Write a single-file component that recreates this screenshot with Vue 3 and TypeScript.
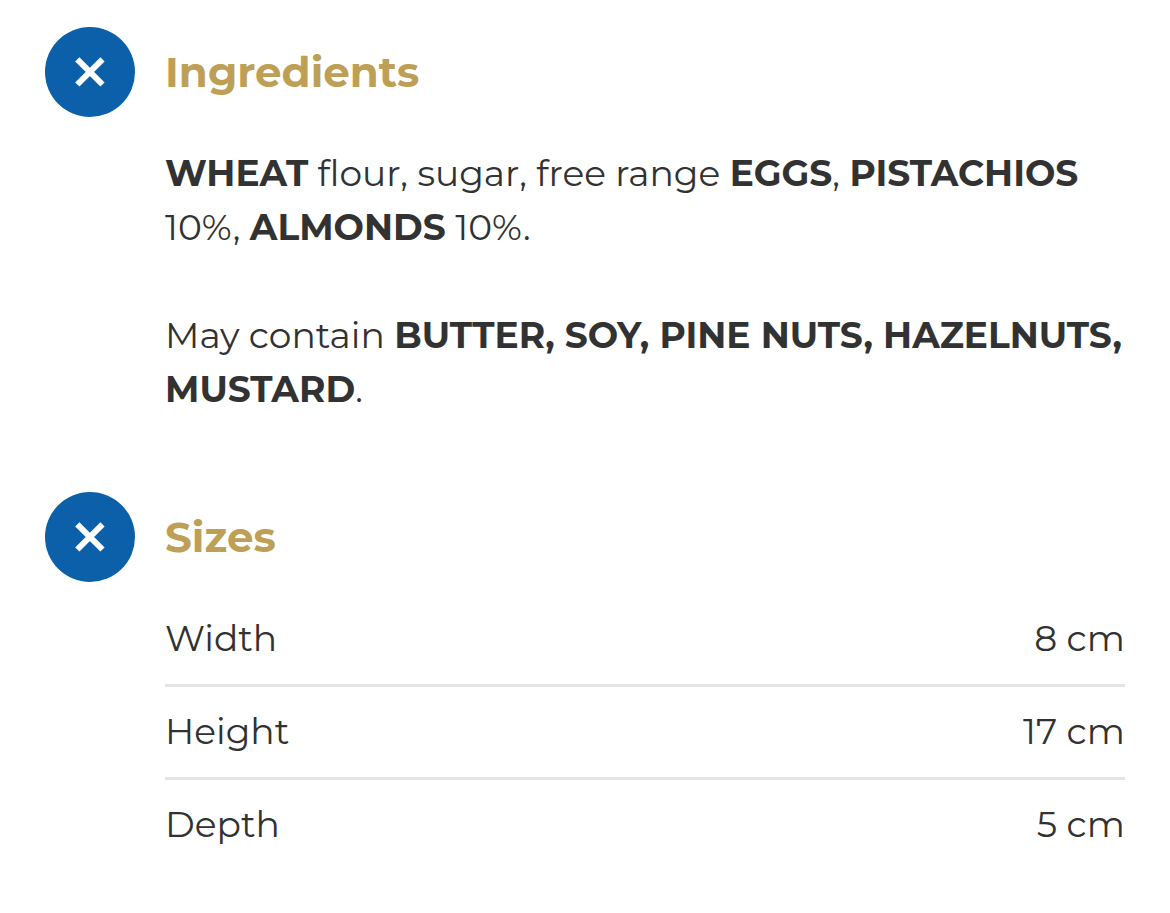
<script setup lang="ts">
import { ref } from 'vue'

interface Part {
  text: string
  strong?: boolean
}

const paragraphs: Part[][] = [
  [
    { text: 'WHEAT', strong: true },
    { text: ' flour, sugar, free range ' },
    { text: 'EGGS', strong: true },
    { text: ', ' },
    { text: 'PISTACHIOS', strong: true },
    { text: ' 10%, ' },
    { text: 'ALMONDS', strong: true },
    { text: ' 10%.' },
  ],
  [
    { text: 'May contain ' },
    { text: 'BUTTER, SOY, PINE NUTS, HAZELNUTS, MUSTARD', strong: true },
    { text: '.' },
  ],
]

const sizes = [
  { name: 'Width', value: '8 cm' },
  { name: 'Height', value: '17 cm' },
  { name: 'Depth', value: '5 cm' },
]

const ingredientsOpen = ref(true)
const sizesOpen = ref(true)
</script>

<template>
  <main class="details">
    <section class="panel">
      <h2 class="heading">
        <button class="toggle" type="button" :aria-expanded="ingredientsOpen" @click="ingredientsOpen = !ingredientsOpen">
          <span class="badge">
            <svg class="icon" viewBox="0 0 90 90" aria-hidden="true">
              <path d="M32.3 32.3L57.5 57.5M57.5 32.3L32.3 57.5" />
            </svg>
          </span>
          <span>Ingredients</span>
        </button>
      </h2>
      <div v-show="ingredientsOpen" class="body">
        <p v-for="(parts, i) in paragraphs" :key="i" class="text"><template v-for="(part, j) in parts" :key="j"><strong v-if="part.strong">{{ part.text }}</strong><template v-else>{{ part.text }}</template></template></p>
      </div>
    </section>

    <section class="panel">
      <h2 class="heading">
        <button class="toggle" type="button" :aria-expanded="sizesOpen" @click="sizesOpen = !sizesOpen">
          <span class="badge">
            <svg class="icon" viewBox="0 0 90 90" aria-hidden="true">
              <path d="M32.3 32.3L57.5 57.5M57.5 32.3L32.3 57.5" />
            </svg>
          </span>
          <span>Sizes</span>
        </button>
      </h2>
      <div v-show="sizesOpen" class="body">
        <table class="sizes">
          <tbody>
            <tr v-for="size in sizes" :key="size.name">
              <th scope="row">{{ size.name }}</th>
              <td>{{ size.value }}</td>
            </tr>
          </tbody>
        </table>
      </div>
    </section>
  </main>
</template>

<style>
body {
  background: #fff;
}
</style>

<style scoped>
.details {
  display: flex;
  flex-direction: column;
  gap: 76px;
  padding: 27px 45px;
  color: #323232;
  font-family: Montserrat, Inter, sans-serif;
  font-size: 36px;
  line-height: 54px;
}

.heading {
  margin: 0;
  font-size: 42px;
  line-height: 54px;
}

.toggle {
  display: flex;
  align-items: center;
  gap: 30px;
  width: 100%;
  padding: 0;
  border: 0;
  background: none;
  color: #be9f56;
  font: inherit;
  font-weight: 700;
  text-align: left;
  cursor: pointer;
}

.badge {
  flex: none;
  width: 90px;
  height: 90px;
  border-radius: 50%;
  background: #0b60a9;
}

.icon {
  display: block;
  width: 100%;
  height: 100%;
  fill: none;
  stroke: #fff;
  stroke-width: 6;
}

.body {
  margin: 29px 0 0 120px;
}

.text {
  margin: 0;
}

.text + .text {
  margin-top: 54px;
}

.sizes {
  width: 100%;
  border-collapse: collapse;
}

.sizes th,
.sizes td {
  padding: 0 0 19px;
  font-weight: 400;
  text-align: left;
}

.sizes td {
  text-align: right;
}

.sizes tr + tr th,
.sizes tr + tr td {
  padding-top: 17px;
  border-top: 3px solid #e5e5e5;
}
</style>
